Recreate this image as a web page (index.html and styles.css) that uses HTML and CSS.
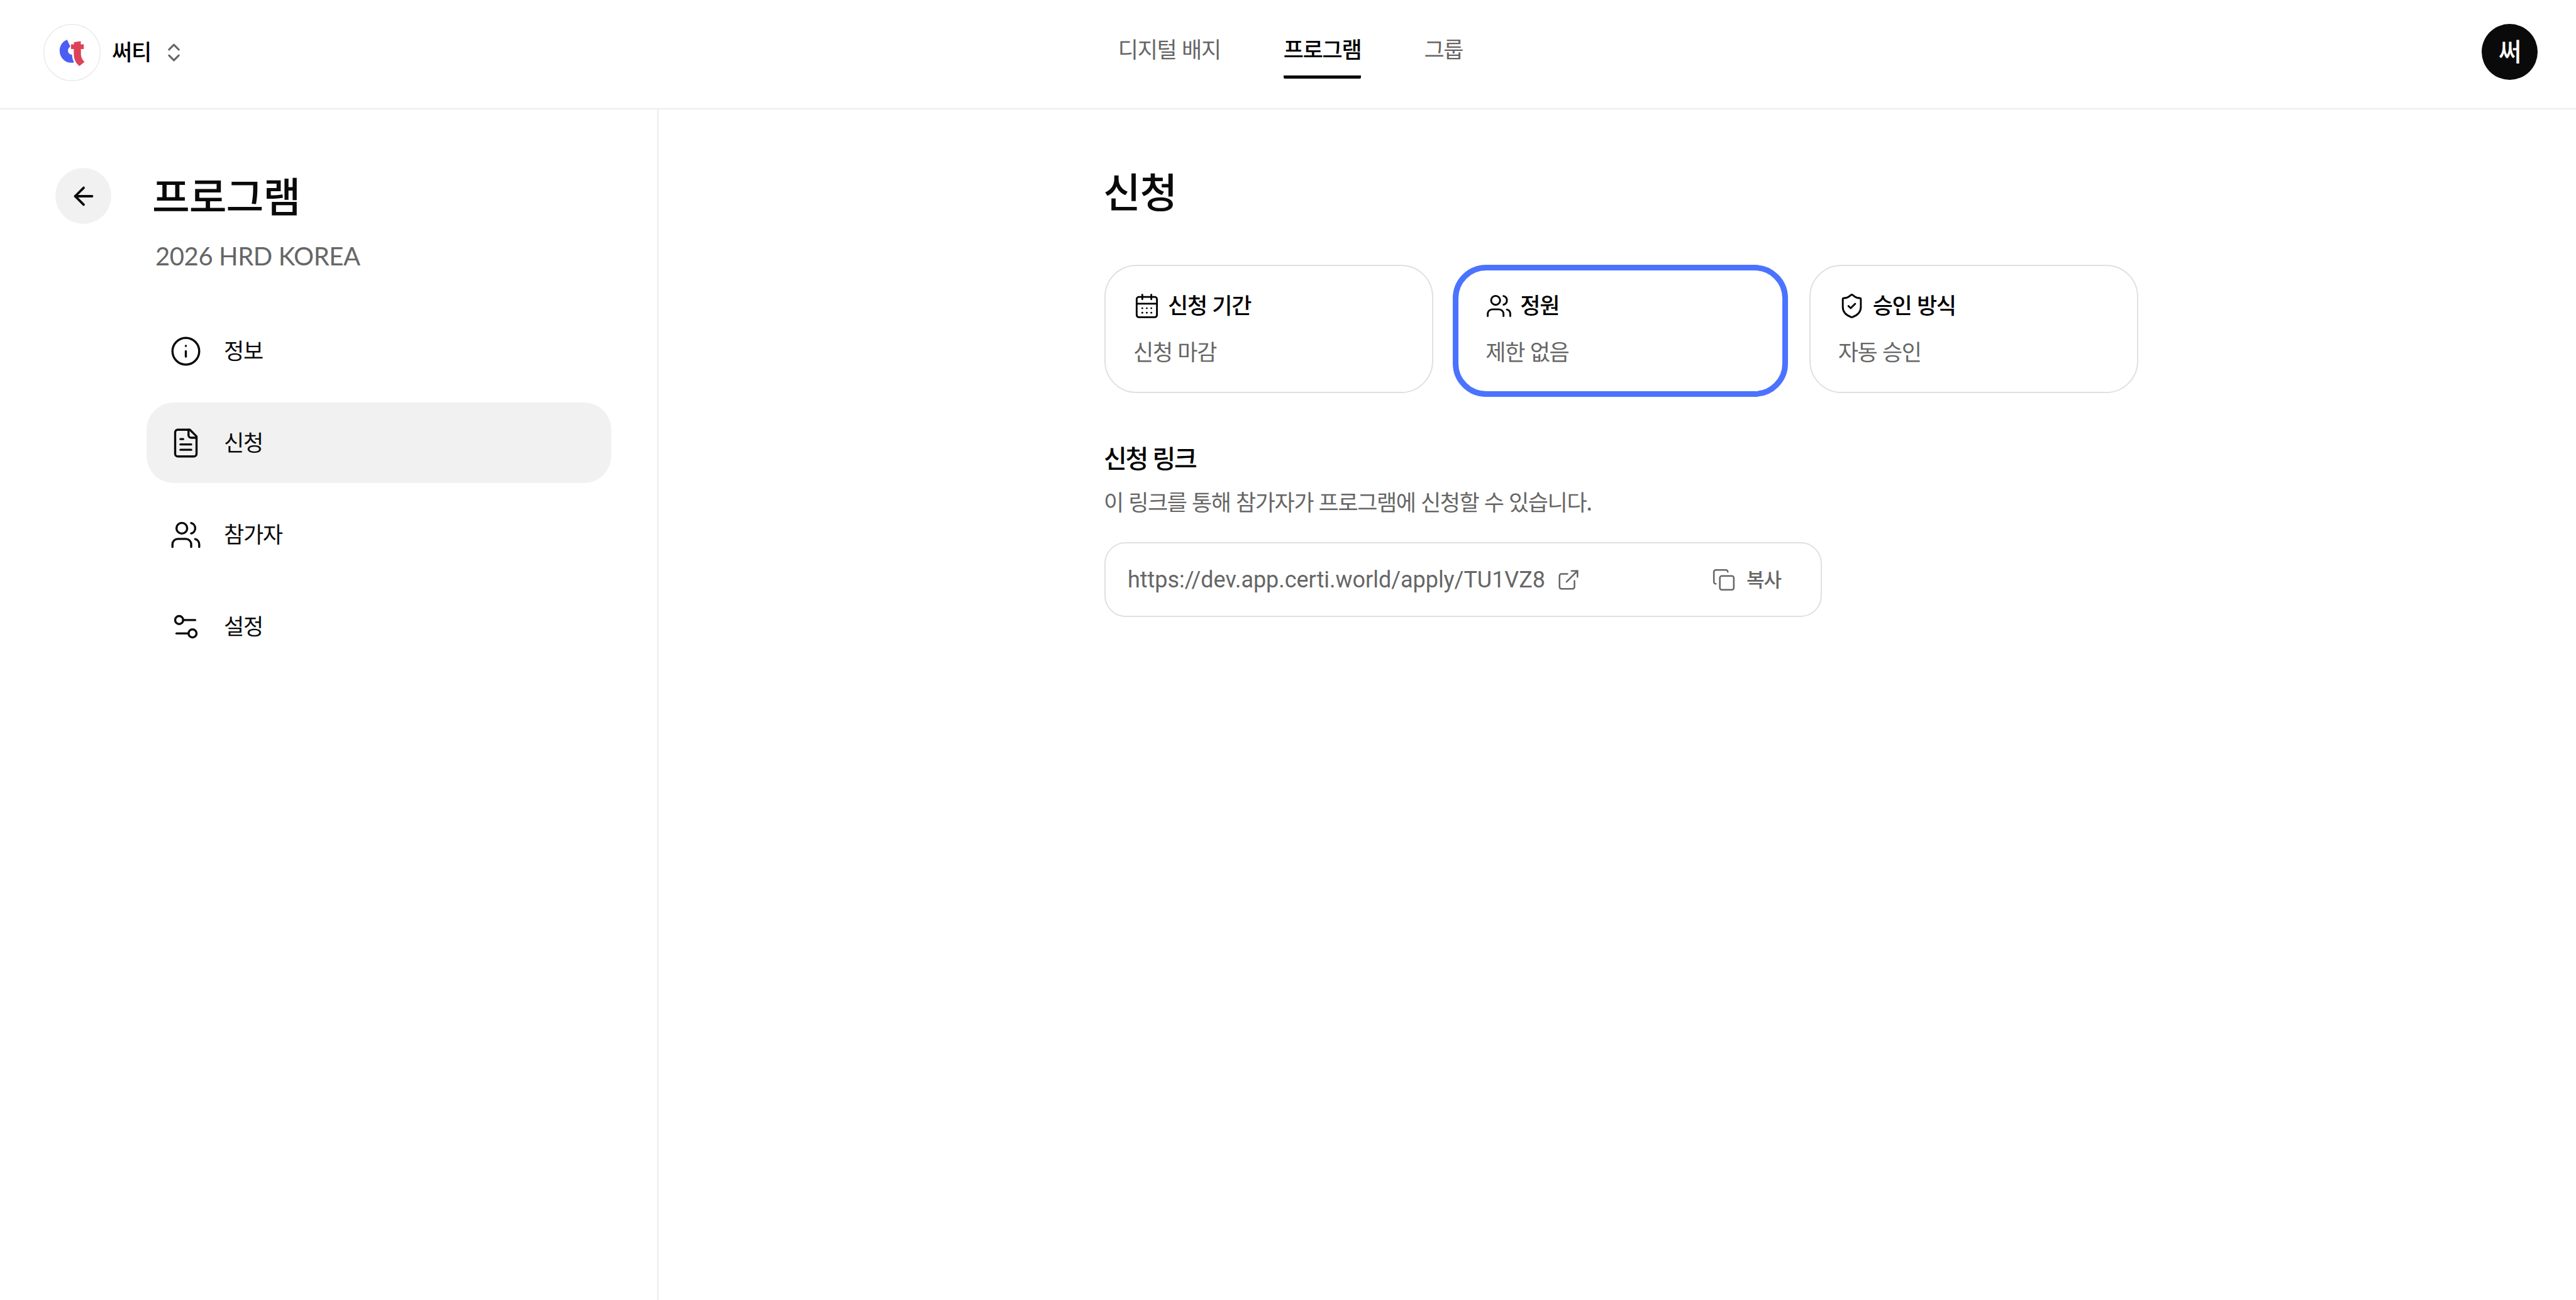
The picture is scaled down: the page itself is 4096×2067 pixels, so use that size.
FILE: index.html
```html
<!DOCTYPE html>
<html lang="ko">
<head>
<meta charset="UTF-8">
<title>프로그램</title>
<meta name="viewport" content="width=device-width,initial-scale=1">
<link rel="stylesheet" href="styles.css">
</head>
<body>
<header class="topbar">
  <div class="org">
    <svg class="org-logo" viewBox="48 95 384 384">
      <circle cx="240" cy="287" r="189.500" fill="#fff" stroke="#e8e8e8" stroke-width="5"/>
      <path fill="#4b5df5" d="M207 202C178 212 157 240 157 275C157 320 192 356 237 356C244 356 249 355 254 353C246 340 241 322 240 302C224 300 213 290 213 274C213 262 219 253 229 247Z"/>
      <path fill="#dc4359" d="M253 217L299 211V232H319V264H300V300C300 320 309 335 324 350L289 378C265 358 252 332 252 298V264H233V232H253Z"/>
    </svg>
    <span class="org-name">써티</span>
    <svg class="icon org-chevron" viewBox="0 0 24 24"><path d="m7 15 5 5 5-5"/><path d="m7 9 5-5 5 5"/></svg>
  </div>
  <nav class="tabs">
    <a class="tab">디지털 배지</a>
    <a class="tab active">프로그램</a>
    <a class="tab">그룹</a>
  </nav>
  <div class="avatar">써</div>
</header>

<div class="layout">
  <!-- sidebar -->
  <aside class="sidebar">
    <div class="back">
      <svg class="icon" viewBox="0 0 24 24"><path d="m12 19-7-7 7-7"/><path d="M19 12H5"/></svg>
    </div>
    <div class="side-body">
      <h2 class="side-title">프로그램</h2>
      <p class="side-sub">2026 HRD KOREA</p>
      <ul class="menu">
        <li class="menu-item">
          <svg class="icon" viewBox="0 0 24 24"><circle cx="12" cy="12" r="10"/><path d="M12 16v-4"/><path d="M12 8h.01"/></svg>
          <span>정보</span>
        </li>
        <li class="menu-item active">
          <svg class="icon" viewBox="0 0 24 24"><path d="M15 2H6a2 2 0 0 0-2 2v16a2 2 0 0 0 2 2h12a2 2 0 0 0 2-2V7Z"/><path d="M14 2v4a2 2 0 0 0 2 2h4"/><path d="M10 9H8"/><path d="M16 13H8"/><path d="M16 17H8"/></svg>
          <span>신청</span>
        </li>
        <li class="menu-item">
          <svg class="icon" viewBox="0 0 24 24"><path d="M16 21v-2a4 4 0 0 0-4-4H6a4 4 0 0 0-4 4v2"/><circle cx="9" cy="7" r="4"/><path d="M22 21v-2a4 4 0 0 0-3-3.87"/><path d="M16 3.130a4 4 0 0 1 0 7.750"/></svg>
          <span>참가자</span>
        </li>
        <li class="menu-item">
          <svg class="icon" viewBox="0 0 24 24"><path d="M14 17H5"/><path d="M19 7h-9"/><circle cx="17" cy="17" r="3"/><circle cx="7" cy="7" r="3"/></svg>
          <span>설정</span>
        </li>
      </ul>
    </div>
  </aside>

  <!-- content -->
  <main class="content">
    <h1 class="page-title">신청</h1>
    <div class="cards">
      <div class="card">
        <div class="card-head">
          <svg class="icon" viewBox="0 0 24 24"><path d="M8 2v4"/><path d="M16 2v4"/><rect width="18" height="18" x="3" y="4" rx="2"/><path d="M3 10h18"/><path d="M8 14h.01"/><path d="M12 14h.01"/><path d="M16 14h.01"/><path d="M8 18h.01"/><path d="M12 18h.01"/><path d="M16 18h.01"/></svg>
          <span>신청 기간</span>
        </div>
        <div class="card-value">신청 마감</div>
      </div>
      <div class="card selected">
        <div class="card-head">
          <svg class="icon" viewBox="0 0 24 24"><path d="M16 21v-2a4 4 0 0 0-4-4H6a4 4 0 0 0-4 4v2"/><circle cx="9" cy="7" r="4"/><path d="M22 21v-2a4 4 0 0 0-3-3.87"/><path d="M16 3.130a4 4 0 0 1 0 7.750"/></svg>
          <span>정원</span>
        </div>
        <div class="card-value">제한 없음</div>
      </div>
      <div class="card">
        <div class="card-head">
          <svg class="icon" viewBox="0 0 24 24"><path d="M20 13c0 5-3.500 7.500-7.660 8.950a1 1 0 0 1-.67-.01C7.500 20.500 4 18 4 13V6a1 1 0 0 1 1-1c2 0 4.500-1.200 6.240-2.720a1.170 1.170 0 0 1 1.520 0C14.510 3.810 17 5 19 5a1 1 0 0 1 1 1z"/><path d="m9 12 2 2 4-4"/></svg>
          <span>승인 방식</span>
        </div>
        <div class="card-value">자동 승인</div>
      </div>
    </div>

    <h3 class="link-title">신청 링크</h3>
    <p class="link-desc">이 링크를 통해 참가자가 프로그램에 신청할 수 있습니다.</p>
    <div class="linkbox">
      <a class="link-url">https://dev.app.certi.world/apply/TU1VZ8</a>
      <svg class="icon" viewBox="0 0 24 24"><path d="M15 3h6v6"/><path d="M10 14 21 3"/><path d="M18 13v6a2 2 0 0 1-2 2H5a2 2 0 0 1-2-2V8a2 2 0 0 1 2-2h6"/></svg>
      <button class="copy">
        <svg class="icon" viewBox="0 0 24 24"><rect width="14" height="14" x="8" y="8" rx="2"/><path d="M4 16c-1.100 0-2-.9-2-2V4c0-1.100.9-2 2-2h10c1.100 0 2 .9 2 2"/></svg>
        <span>복사</span>
      </button>
    </div>
  </main>
</div>
</body>
</html>
```
FILE: styles.css
```css
*,*::after{box-sizing:border-box}
body{margin:0;background:#fff;color:#0a0a0a;height:2067px;overflow:hidden;
     display:flex;flex-direction:column;
     font-family:"Noto Sans CJK KR",sans-serif;font-size:35px;letter-spacing:-1.3px}
h1,h2,h3,p,ul{margin:0;padding:0;font-weight:500}
ul{list-style:none}
.icon{display:block;flex:none;fill:none;stroke:currentColor;stroke-width:1.6;
      stroke-linecap:round;stroke-linejoin:round}

/* top bar */
.topbar{height:174px;flex:none;border-bottom:2px solid #ececec;
        display:grid;grid-template-columns:1fr auto 1fr;padding:0 61px 0 69px}
.org{display:flex;align-items:center;height:166px}
.org-logo{width:91px;height:91px;display:block}
.org-name{margin-left:18px;font-weight:500;color:#000;line-height:52px;padding-bottom:4px}
.org-chevron{width:37px;height:37px;stroke-width:2;color:#666;margin-left:18px}
.tabs{display:flex;gap:100px;padding-top:51px}
.tab{height:74px;line-height:52px;color:#666}
.tab.active{color:#000;font-weight:500;border-bottom:5px solid #000;border-radius:2px}
.avatar{justify-self:end;width:89px;height:89px;margin-top:38px;border-radius:50%;
        background:#0a0a0a;color:#fff;font-size:40px;font-weight:500;
        line-height:85px;text-align:center}

.layout{flex:1;display:flex}

/* sidebar */
.sidebar{width:1047px;flex:none;border-right:2px solid #ececec;
         display:flex;align-items:flex-start;padding:93px 73px 0 88px}
.back{width:89px;height:89px;flex:none;border-radius:50%;background:#f1f1f1;
      display:flex;align-items:center;justify-content:center}
.back .icon{width:46px;height:46px;stroke-width:2}
.side-body{flex:1;margin-left:56px}
.side-title{font-size:65px;line-height:80px;padding:2px 0 0 9px;letter-spacing:-1px}
.side-sub{font-family:Lato,sans-serif;font-size:40px;line-height:50px;
          font-weight:400;color:#666;padding-left:14px;margin-top:33px;letter-spacing:-.4px}
.menu{display:flex;flex-direction:column;gap:18px;margin-top:62px;font-weight:400}
.menu-item{height:128px;border-radius:43px;padding:0 37px;
           display:flex;align-items:center;gap:35px}
.menu-item.active{background:#f1f1f1}
.menu-item .icon{width:51px;height:51px}
.menu-item span{padding-bottom:5px}

/* content */
.content{width:1644px;margin-left:709px;padding-top:86px}
.page-title{font-size:65px;line-height:84px;margin-left:-2px}
.cards{display:grid;grid-template-columns:repeat(3,1fr);gap:37px;margin-top:77px}
.card{height:204px;border:2px solid #e0e0e0;border-radius:51px;padding:37px 44px;position:relative}
.card-head{display:flex;align-items:center;gap:12px;height:52px;font-weight:500;color:#000}
.card-head .icon{width:43px;height:43px}
.card-head span{padding-bottom:5px}
.card-value{color:#666;line-height:52px;margin-top:20px}
/* highlight ring over the card edge */
.card.selected{border-color:transparent}
.card.selected::after{content:"";position:absolute;left:-8px;top:-2px;width:533px;height:210px;
                      border:9px solid #4b73ff;border-radius:53px}
.link-title{font-size:40px;line-height:56px;margin:74px 0 0 -1px;color:#000;letter-spacing:-2.4px}
.link-desc{color:#666;font-weight:400;line-height:52px;margin:16px 0 0 -1px;letter-spacing:-1.4px}
.linkbox{width:1141px;height:119px;margin-top:39px;border:2px solid #e0e0e0;border-radius:34px;
         display:flex;align-items:center;padding:0 63px 0 35px;color:#666}
.link-url{font-family:Roboto,sans-serif;font-size:36px;letter-spacing:-.04px}
.linkbox .icon{width:38px;height:38px}
.link-url + .icon{margin-left:18px}
.copy{margin-left:auto;display:flex;align-items:center;gap:17px;border:0;background:none;padding:0;
      font:500 31px/46px "Noto Sans CJK KR",sans-serif;color:#666;letter-spacing:-1px}
.copy span{padding-bottom:3px}
```
